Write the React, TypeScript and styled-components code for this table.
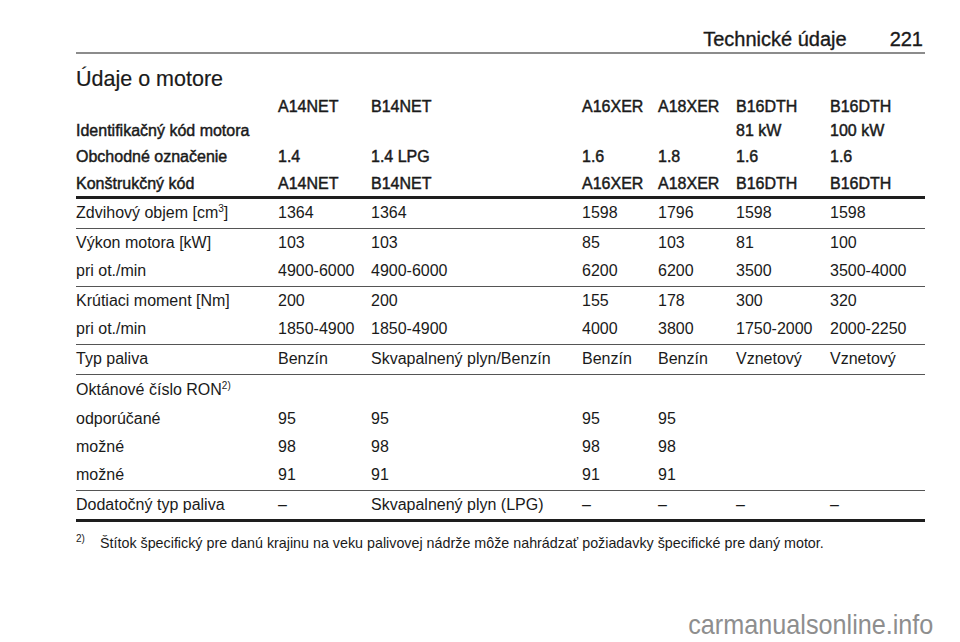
import React from 'react';
import styled, { createGlobalStyle } from 'styled-components';

type Rule = 'none' | 'thin' | 'thick';

interface SpecRow {
  label: React.ReactNode;
  values: string[];
  rule?: Rule;
  height?: number;
}

// horný index (cm3, RON2)) – musí byť definovaný pred dátami
const Sup = styled.sup`
  font-size: 10px;
  line-height: 0;
  vertical-align: 6px;
`;

const HEAD_CODES = ['A14NET', 'B14NET', 'A16XER', 'A18XER', 'B16DTH', 'B16DTH'];
const HEAD_POWER = ['', '', '', '', '81 kW', '100 kW'];

const HEAD_ROWS: SpecRow[] = [
  { label: 'Obchodné označenie', values: ['1.4', '1.4 LPG', '1.6', '1.8', '1.6', '1.6'], height: 28 },
  { label: 'Konštrukčný kód', values: HEAD_CODES, rule: 'thick', height: 25 },
];

const BODY_ROWS: SpecRow[] = [
  {
    label: (
      <>
        Zdvihový objem [cm<Sup>3</Sup>]
      </>
    ),
    values: ['1364', '1364', '1598', '1796', '1598', '1598'],
    rule: 'thin',
  },
  { label: 'Výkon motora [kW]', values: ['103', '103', '85', '103', '81', '100'] },
  {
    label: 'pri ot./min',
    values: ['4900-6000', '4900-6000', '6200', '6200', '3500', '3500-4000'],
    rule: 'thin',
  },
  { label: 'Krútiaci moment [Nm]', values: ['200', '200', '155', '178', '300', '320'] },
  {
    label: 'pri ot./min',
    values: ['1850-4900', '1850-4900', '4000', '3800', '1750-2000', '2000-2250'],
    rule: 'thin',
  },
  {
    label: 'Typ paliva',
    values: ['Benzín', 'Skvapalnený plyn/Benzín', 'Benzín', 'Benzín', 'Vznetový', 'Vznetový'],
    rule: 'thin',
  },
  {
    label: (
      <>
        Oktánové číslo RON<Sup>2)</Sup>
      </>
    ),
    values: ['', '', '', '', '', ''],
    height: 29,
  },
  { label: 'odporúčané', values: ['95', '95', '95', '95', '', ''], height: 29 },
  { label: 'možné', values: ['98', '98', '98', '98', '', ''] },
  { label: 'možné', values: ['91', '91', '91', '91', '', ''], rule: 'thin' },
  {
    label: 'Dodatočný typ paliva',
    values: ['–', 'Skvapalnený plyn (LPG)', '–', '–', '–', '–'],
    rule: 'thick',
  },
];

const App: React.FC = () => {
  return (
    <>
      <GlobalStyle />
      <Page>
        <RunningHead>
          <span>Technické údaje</span>
          <span>221</span>
        </RunningHead>

        <SectionTitle>Údaje o motore</SectionTitle>

        <Table>
          <Row $height={48} $rule="none">
            <HeadLabel $bottom>Identifikačný kód motora</HeadLabel>
            {HEAD_CODES.map((code, i) => (
              <HeadCell key={i}>
                <Line>{code}</Line>
                <Line>{HEAD_POWER[i] || '\u00a0'}</Line>
              </HeadCell>
            ))}
          </Row>
          {HEAD_ROWS.map((row, i) => (
            <Row key={i} $height={row.height ?? 28} $rule={row.rule ?? 'none'}>
              <HeadLabel>{row.label}</HeadLabel>
              {row.values.map((v, j) => (
                <HeadCell key={j}>{v}</HeadCell>
              ))}
            </Row>
          ))}

          {BODY_ROWS.map((row, i) => (
            <Row key={i} $height={row.height ?? 28} $rule={row.rule ?? 'none'}>
              <Cell>{row.label}</Cell>
              {row.values.map((v, j) => (
                <Cell key={j}>{v}</Cell>
              ))}
            </Row>
          ))}
        </Table>

        <Footnote>
          <FootMark>2)</FootMark>
          <span>
            Štítok špecifický pre danú krajinu na veku palivovej nádrže môže nahrádzať požiadavky
            špecifické pre daný motor.
          </span>
        </Footnote>

        <WatermarkBar>
          <Watermark>carmanualsonline.info</Watermark>
        </WatermarkBar>
      </Page>
    </>
  );
};

const GlobalStyle = createGlobalStyle`
  html, body {
    margin: 0;
    padding: 0;
    background: #ffffff;
  }
  body {
    font-family: "Liberation Sans", Arial, sans-serif;
    color: #1a1a1a;
  }
`;

const Page = styled.div`
  width: 960px;
  height: 642px;
  box-sizing: border-box;
  padding: 28px 35px 0 76px;
  display: flex;
  flex-direction: column;
  overflow: hidden;
`;

const RunningHead = styled.div`
  display: flex;
  justify-content: flex-end;
  align-items: flex-end;
  gap: 43px;
  padding: 0 2px 1px 0;
  border-bottom: 2px solid #8c8c8c;
  font-size: 20px;
  line-height: 23px;
  -webkit-text-stroke: 0.35px #1a1a1a;
`;

const SectionTitle = styled.h1`
  margin: 10px 0 0;
  font-size: 21.5px;
  line-height: 30px;
  font-weight: normal;
  -webkit-text-stroke: 0.2px #1a1a1a;
`;

const Table = styled.div`
  display: flex;
  flex-direction: column;
  width: 849px;
  margin-top: 1px;
`;

const Row = styled.div<{ $height: number; $rule: Rule }>`
  display: grid;
  grid-template-columns: 202px 93px 211px 76px 78px 94px 95px;
  height: ${(p) => p.$height}px;
  align-items: center;
  font-size: 16px;
  border-bottom: ${(p) =>
    p.$rule === 'thick' ? '3px solid #1e1e1e' : p.$rule === 'thin' ? '1px solid #555555' : 'none'};
  padding-bottom: ${(p) => (p.$rule === 'thin' ? '1px' : '0')};
`;

const Cell = styled.div`
  white-space: nowrap;
  line-height: 20px;
`;

const HeadCell = styled(Cell)`
  -webkit-text-stroke: 0.45px #1a1a1a;
`;

const HeadLabel = styled(HeadCell)<{ $bottom?: boolean }>`
  align-self: ${(p) => (p.$bottom ? 'end' : 'center')};
  padding-bottom: ${(p) => (p.$bottom ? '2px' : '0')};
`;

const Line = styled.div`
  line-height: 24px;
`;

const Footnote = styled.div`
  display: flex;
  margin-top: 12px;
  font-size: 14.3px;
  line-height: 18px;
  color: #1a1a1a;
`;

const FootMark = styled.span`
  width: 24px;
  flex: none;
  font-size: 10px;
  position: relative;
  top: -4px;
`;

const WatermarkBar = styled.div`
  margin-top: auto;
  display: flex;
  justify-content: flex-end;
  margin-right: -8px;
  margin-bottom: 0;
`;

const Watermark = styled.div`
  font-family: "Liberation Sans", Arial, sans-serif;
  font-size: 28px;
  line-height: 34px;
  color: #8e8e8e;
  transform: scaleX(0.9);
  transform-origin: right center;
  white-space: nowrap;
`;

export default App;
